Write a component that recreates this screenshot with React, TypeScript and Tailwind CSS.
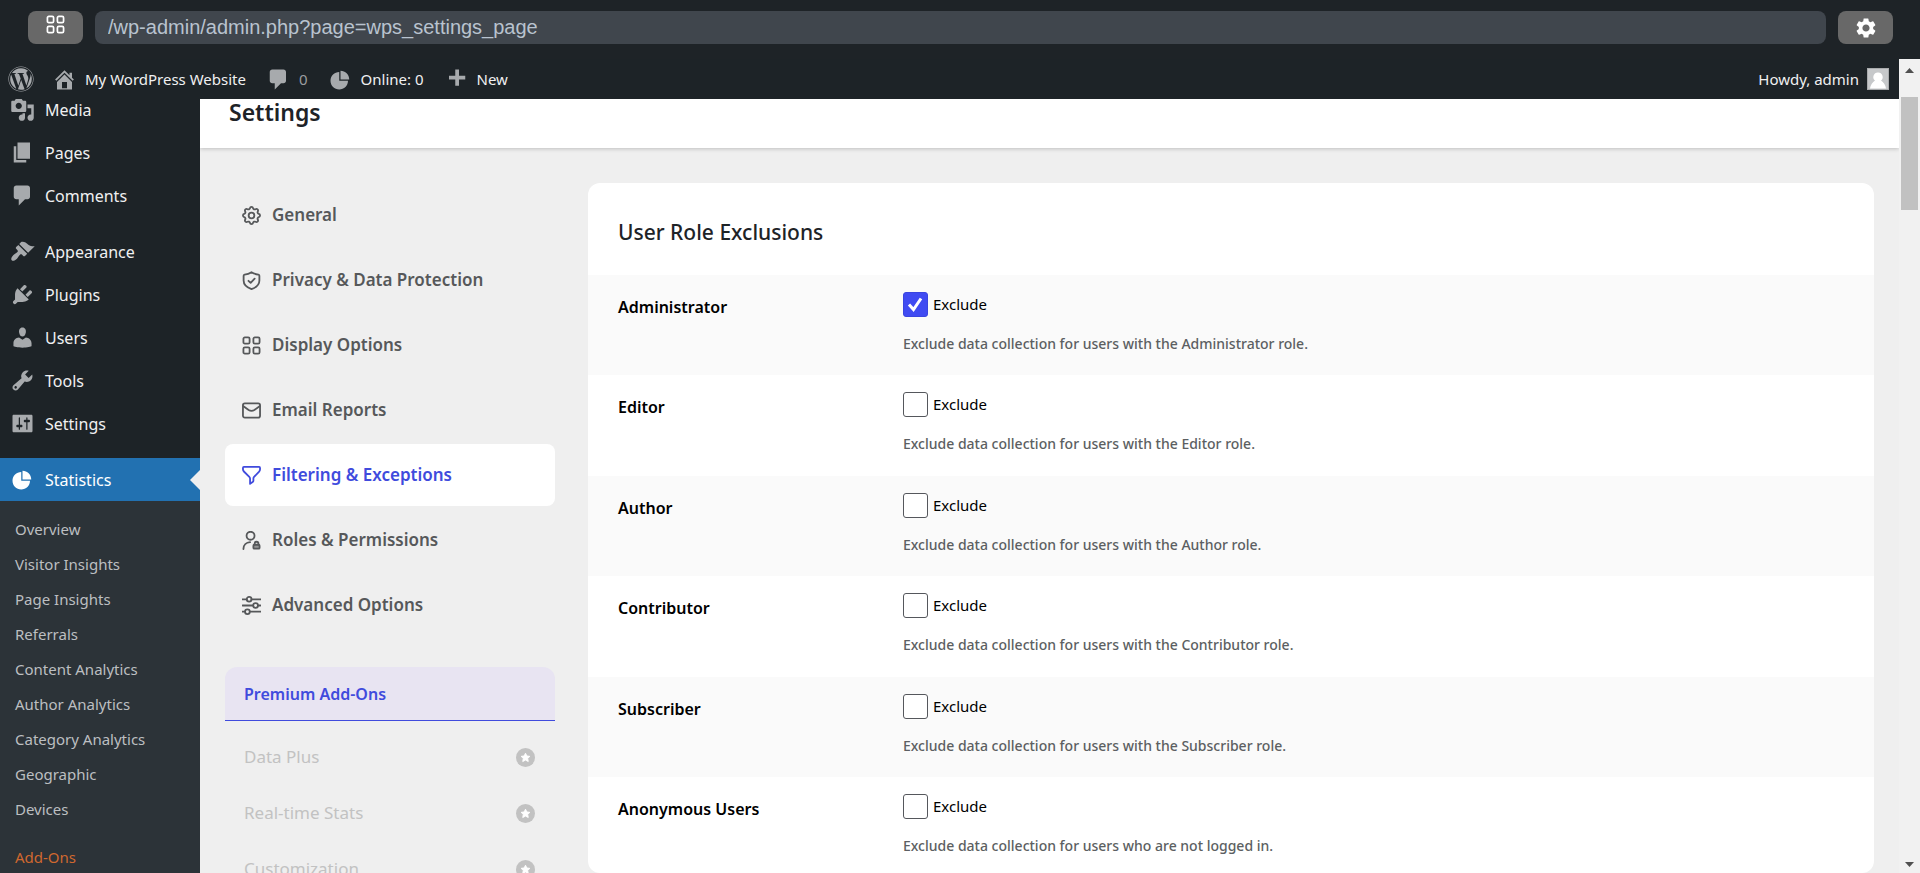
import type { ReactNode } from "react";
import { FaWordpress } from "react-icons/fa";
import { MdSettings } from "react-icons/md";

// 20x20 admin glyphs
const GLYPHS = {
  home: "M16 8.5l1.53 1.53-1.06 1.06L10 4.6l-6.47 6.49-1.06-1.06L10 2.5l4 4v-2h2v4zm-6-2.46l6 5.99V18H4v-5.97zM12 17v-5H8v5h4z",
  plus: "M17 7v3h-5v5H9v-5H4V7h5V2h3v5h5z",
  comments: "M5 2h9c1.1 0 2 .9 2 2v7c0 1.1-.9 2-2 2h-2l-5 5v-5H5c-1.1 0-2-.9-2-2V4c0-1.1.9-2 2-2z",
  pie: "M10 10V3c3.87 0 7 3.13 7 7h-7zM9 4v7h7c0 3.87-3.13 7-7 7s-7-3.13-7-7 3.13-7 7-7z",
  media:
    "M13 11V4c0-.55-.45-1-1-1h-1.67L9 1H5L3.67 3H2c-.55 0-1 .45-1 1v7c0 .55.45 1 1 1h10c.55 0 1-.45 1-1zM7 4.5c1.38 0 2.5 1.12 2.5 2.5S8.38 9.5 7 9.5 4.5 8.38 4.5 7 5.62 4.5 7 4.5zM14 6h5v10.5c0 1.38-1.12 2.5-2.5 2.5S14 17.88 14 16.5s1.12-2.5 2.5-2.5c.17 0 .34.02.5.05V9h-3V6zm-4 8.05V13h2v3.5c0 1.38-1.12 2.5-2.5 2.5S7 17.88 7 16.5 8.12 14 9.5 14c.17 0 .34.02.5.05z",
  pages: "M6 15V2h10v13H6zm-1 1h8v2H3V5h2v11z",
  appearance:
    "M14.48 11.06L7.41 3.99l1.5-1.5c.5-.56 2.3-.47 3.51.32 1.21.8 1.43 1.28 2.91 2.1 1.18.64 2.45 1.26 4.45.85zm-.71.71L6.7 4.7 4.93 6.47c-.39.39-.39 1.02 0 1.41l1.06 1.06c.39.39.39 1.03 0 1.42-.6.6-1.43 1.11-2.21 1.69-.35.26-.7.53-1.01.84C1.43 14.23.4 16.08 1.4 17.07c.99 1 2.84-.03 4.18-1.36.31-.31.58-.66.85-1.02.57-.78 1.08-1.61 1.69-2.21.39-.39 1.02-.39 1.41 0l1.06 1.06c.39.39 1.02.39 1.41 0z",
  plugins:
    "M13.11 4.36L9.87 7.6 8 5.73l3.24-3.24c.35-.34 1.05-.2 1.56.32.52.51.66 1.21.31 1.55zm-8 1.77l.91-1.12 9.01 9.01-1.19.84c-.71.71-2.63 1.16-3.82 1.16H6.14L4.9 17.26c-.59.59-1.54.59-2.12 0-.59-.58-.59-1.53 0-2.12l1.24-1.24v-3.88c0-1.13.4-3.19 1.09-3.89zm7.26 3.97l3.24-3.24c.34-.35 1.04-.21 1.55.31.52.51.66 1.21.31 1.55l-3.24 3.25z",
  users:
    "M10 9.25c-2.27 0-2.73-3.44-2.73-3.44C7 4.02 7.82 2 9.97 2c2.16 0 2.98 2.02 2.71 3.81 0 0-.41 3.44-2.68 3.44zm0 2.57L12.72 10c2.39 0 4.52 2.33 4.52 4.53v2.49s-3.65 1.13-7.24 1.13c-3.65 0-7.24-1.13-7.24-1.13v-2.49c0-2.25 1.94-4.48 4.47-4.48z",
  tools:
    "M16.68 9.77c-1.34 1.34-3.3 1.67-4.95.99l-5.41 6.52c-.99.99-2.59.99-3.58 0s-.99-2.59 0-3.57l6.52-5.42c-.68-1.65-.35-3.61.99-4.95 1.28-1.28 3.12-1.62 4.72-1.06l-2.89 2.89 2.82 2.82 2.86-2.87c.53 1.58.18 3.39-1.08 4.65zM3.81 16.21c.4.39 1.04.39 1.43 0 .4-.4.4-1.04 0-1.43-.39-.4-1.03-.4-1.43 0-.39.39-.39 1.03 0 1.43z",
  settings:
    "M18 16V4c0-.55-.45-1-1-1H3c-.55 0-1 .45-1 1v12c0 .55.45 1 1 1h14c.55 0 1-.45 1-1zM8 11h1c.55 0 1 .45 1 1s-.45 1-1 1H8v1.5c0 .28-.22.5-.5.5s-.5-.22-.5-.5V13H6c-.55 0-1-.45-1-1s.45-1 1-1h1V5.5c0-.28.22-.5.5-.5s.5.22.5.5V11zm5-2h-1c-.55 0-1-.45-1-1s.45-1 1-1h1V5.5c0-.28.22-.5.5-.5s.5.22.5.5V7h1c.55 0 1 .45 1 1s-.45 1-1 1h-1v5.5c0 .28-.22.5-.5.5s-.5-.22-.5-.5V9z",
};

type GlyphName = keyof typeof GLYPHS;

const MENU: { label: string; icon: GlyphName }[][] = [
  [
    { label: "Media", icon: "media" },
    { label: "Pages", icon: "pages" },
    { label: "Comments", icon: "comments" },
  ],
  [
    { label: "Appearance", icon: "appearance" },
    { label: "Plugins", icon: "plugins" },
    { label: "Users", icon: "users" },
    { label: "Tools", icon: "tools" },
    { label: "Settings", icon: "settings" },
  ],
];

const SUBMENU = [
  "Overview",
  "Visitor Insights",
  "Page Insights",
  "Referrals",
  "Content Analytics",
  "Author Analytics",
  "Category Analytics",
  "Geographic",
  "Devices",
];

const SquaresIcon = (
  <>
    <rect x="1.5" y="1.5" width="6.5" height="6.5" rx="1.5" />
    <rect x="12" y="1.5" width="6.5" height="6.5" rx="1.5" />
    <rect x="1.5" y="12" width="6.5" height="6.5" rx="1.5" />
    <rect x="12" y="12" width="6.5" height="6.5" rx="1.5" />
  </>
);

const TABS: { label: string; active?: boolean; icon: ReactNode }[] = [
  {
    label: "General",
    icon: (
      <g transform="translate(-2 -2)">
        <path d="M10.325 4.317c.426 -1.756 2.924 -1.756 3.35 0a1.724 1.724 0 0 0 2.573 1.066c1.543 -.94 3.31 .826 2.37 2.37a1.724 1.724 0 0 0 1.065 2.572c1.756 .426 1.756 2.924 0 3.35a1.724 1.724 0 0 0 -1.066 2.573c.94 1.543 -.826 3.31 -2.37 2.37a1.724 1.724 0 0 0 -2.572 1.065c-.426 1.756 -2.924 1.756 -3.35 0a1.724 1.724 0 0 0 -2.573 -1.066c-1.543 .94 -3.31 -.826 -2.37 -2.37a1.724 1.724 0 0 0 -1.065 -2.572c-1.756 -.426 -1.756 -2.924 0 -3.35a1.724 1.724 0 0 0 1.066 -2.573c-.94 -1.543 .826 -3.31 2.37 -2.37c1 .608 2.296 .07 2.572 -1.065z" />
        <circle cx="12" cy="12" r="3" />
      </g>
    ),
  },
  {
    label: "Privacy & Data Protection",
    icon: (
      <>
        <path d="M10 1.2c2.5 1.6 5 2.3 7.3 2.6.6.1 1 .6 1 1.2v5c0 4.3-3.3 7.3-8.3 9-5-1.7-8.3-4.7-8.3-9V5c0-.6.4-1.1 1-1.2C5 3.5 7.5 2.8 10 1.2z" />
        <path d="M6.8 10.3l2.3 2.2 4.2-4.4" />
      </>
    ),
  },
  { label: "Display Options", icon: SquaresIcon },
  {
    label: "Email Reports",
    icon: (
      <>
        <rect x="1" y="2.5" width="18" height="15" rx="2" />
        <path d="M1.5 5.5l5.5 4c2 1.3 4 1.3 6 0l5.5-4" />
      </>
    ),
  },
  {
    label: "Filtering & Exceptions",
    active: true,
    icon: (
      <path d="M2 1h16c.6 0 1 .4 1 1v1.5c0 1-.4 1.8-1 2.5l-5.3 5.5c-.5.5-.7 1-.7 1.7v2.3c0 .6-.3 1.1-.8 1.4L8.5 18.8v-5.3c0-.8-.3-1.5-.8-2L2 5.8c-.6-.6-1-1.4-1-2.3V2c0-.6.4-1 1-1z" />
    ),
  },
  {
    label: "Roles & Permissions",
    icon: (
      <>
        <circle cx="9" cy="5" r="4.2" />
        <path d="M1.5 19c0-4.3 3-7 7-7.2" />
        <rect x="12" y="14.5" width="6.5" height="4" rx="1" fill="currentColor" fillOpacity="0.6" />
        <path d="M13.3 14.3v-1a2 2 0 0 1 4 0v1" />
      </>
    ),
  },
  {
    label: "Advanced Options",
    icon: (
      <>
        <path d="M.5 3.5h4.5M10 3.5h9.5M.5 10h11M17 10h2.5M.5 16.5h2.5M8.5 16.5h11" />
        <circle cx="7.5" cy="3.5" r="2.5" />
        <circle cx="14.3" cy="10" r="2.5" />
        <circle cx="5.7" cy="16.5" r="2.5" />
      </>
    ),
  },
];

const ADDONS = ["Data Plus", "Real-time Stats", "Customization"];

const ROLES = [
  { name: "Administrator", who: "with the Administrator role", checked: true },
  { name: "Editor", who: "with the Editor role" },
  { name: "Author", who: "with the Author role" },
  { name: "Contributor", who: "with the Contributor role" },
  { name: "Subscriber", who: "with the Subscriber role" },
  { name: "Anonymous Users", who: "who are not logged in" },
];

function Glyph({ name, className }: { name: GlyphName; className: string }) {
  return (
    <svg viewBox="0 0 20 20" fill="currentColor" fillRule="evenodd" className={className}>
      <path d={GLYPHS[name]} />
    </svg>
  );
}

function BrowserBar() {
  return (
    <div className="flex h-[59px] shrink-0 items-start gap-3 bg-[#1e2327] pt-[11px] pr-[27px] pl-7">
      <button aria-label="Apps" className="flex h-[33px] w-[55px] items-center justify-center rounded-lg bg-[#686868] pb-1.5 text-white">
        <svg viewBox="0 0 20 20" fill="none" stroke="currentColor" strokeWidth="1.8" className="size-[19px]">
          {SquaresIcon}
        </svg>
      </button>
      <input
        aria-label="Address"
        defaultValue="/wp-admin/admin.php?page=wps_settings_page"
        className="h-[33px] min-w-0 flex-1 rounded-lg bg-[#40464d] px-[13px] font-['Liberation_Sans',sans-serif] text-[20px] text-[#b9c3cf] outline-none"
      />
      <button aria-label="Settings" className="flex h-[33px] w-[55px] items-center justify-center rounded-lg bg-[#686868] text-white">
        <MdSettings className="size-6" />
      </button>
    </div>
  );
}

function AdminBar() {
  return (
    <header className="flex h-10 shrink-0 items-center bg-[#1d2327] pr-[10px] pl-2 text-[15px] text-[#f0f0f1]">
      <a href="#" aria-label="WordPress" className="text-[#a7aaad]">
        <FaWordpress className="size-[26px]" />
      </a>
      <a href="#" className="ml-[18px] flex items-center gap-2">
        <Glyph name="home" className="size-[25px] text-[#a7aaad]" />
        My WordPress Website
      </a>
      <a href="#" className="ml-5 flex items-center gap-2 text-[#9a9da0]">
        <Glyph name="comments" className="size-[25px] text-[#a7aaad]" />
        0
      </a>
      <a href="#" className="ml-5 flex items-center gap-2">
        <Glyph name="pie" className="size-[25px] text-[#a7aaad]" />
        Online: 0
      </a>
      <a href="#" className="ml-5 flex items-center gap-2">
        <Glyph name="plus" className="size-[25px] text-[#a7aaad]" />
        New
      </a>
      <a href="#" className="ml-auto flex items-center gap-2">
        Howdy, admin
        <svg viewBox="0 0 22 22" className="size-[22px]">
          <rect width="22" height="22" fill="#a9abad" />
          <rect x="1" y="1" width="20" height="20" fill="#c6c8ca" />
          <path d="M11 4.5a4.5 4.5 0 0 1 3 8c2.5 1.5 4.5 4.5 5 8H3c.5-3.5 2.5-6.500 5-8a4.5 4.5 0 0 1 3-8z" fill="#fff" />
        </svg>
      </a>
    </header>
  );
}

function Sidebar() {
  return (
    <nav aria-label="Main menu" className="w-[200px] shrink-0 overflow-hidden bg-[#1d2327] text-[16px] text-[#f0f0f1]">
      {/* list is scrolled slightly under the admin bar */}
      <div className="-mt-[11px]">
        {MENU.map((group, i) => (
          <ul key={i} className="mb-[13px]">
            {group.map(({ label, icon }) => (
              <li key={label}>
                <a href="#" className="flex h-[43px] items-center gap-[10px] pl-[10px]">
                  <Glyph name={icon} className="size-[25px] text-[#a7aaad]" />
                  {label}
                </a>
              </li>
            ))}
          </ul>
        ))}
        <a href="#" className="relative flex h-[43px] items-center gap-[10px] bg-[#2271b1] pl-[10px] text-white">
          <Glyph name="pie" className="size-[25px]" />
          Statistics
          <span className="absolute top-1/2 right-0 -translate-y-1/2 border-y-10 border-r-10 border-y-transparent border-r-[#efefef]" />
        </a>
        <ul className="bg-[#2c3338] pt-[11px] pb-10 text-[15px] text-[#bcbfc1]">
          {SUBMENU.map((label) => (
            <li key={label}>
              <a href="#" className="flex h-[35px] items-center pl-[15px]">{label}</a>
            </li>
          ))}
          <li className="mt-[13px]">
            <a href="#" className="flex h-[35px] items-center pl-[15px] text-[#d0682f]">Add-Ons</a>
          </li>
        </ul>
      </div>
    </nav>
  );
}

function SettingsNav() {
  return (
    <nav aria-label="Settings sections" className="w-[330px] shrink-0 pt-px">
      <ul className="flex flex-col gap-[3px] text-[17px] font-semibold text-[#56585a]">
        {TABS.map(({ label, icon, active }) => (
          <li key={label}>
            <a
              href="#"
              className={`flex h-[62px] items-center gap-[11px] rounded-lg pl-[17px] ${active ? "bg-white text-[#404bdd]" : ""}`}
            >
              <svg
                viewBox="0 0 20 20"
                fill="none"
                stroke="currentColor"
                strokeWidth="1.9"
                strokeLinecap="round"
                strokeLinejoin="round"
                className="size-[19px]"
              >
                {icon}
              </svg>
              {label}
            </a>
          </li>
        ))}
      </ul>
      <h3 className="mt-[31px] flex h-[54px] items-center rounded-t-xl border-b border-[#404bdd] bg-[#e8e4f2] pl-[19px] text-[16px] font-semibold text-[#404bdd]">
        Premium Add-Ons
      </h3>
      <ul className="pt-2 text-[17px] text-[#c2c2c2]">
        {ADDONS.map((label) => (
          <li key={label}>
            <a href="#" className="flex h-14 items-center justify-between pr-5 pl-[19px]">
              {label}
              <svg viewBox="0 0 20 20" className="size-[19px]">
                <circle cx="10" cy="10" r="10" fill="#c2c2c2" />
                <path
                  d="M10 5.5l1.4 2.9 3.2.4-2.3 2.2.6 3.2-2.9-1.5-2.9 1.5.6-3.2-2.3-2.2 3.2-.4z"
                  fill="#fff"
                  stroke="#fff"
                  strokeLinejoin="round"
                />
              </svg>
            </a>
          </li>
        ))}
      </ul>
    </nav>
  );
}

function RoleExclusions() {
  return (
    <section className="min-w-0 flex-1 overflow-hidden rounded-xl bg-white">
      <h2 className="flex h-[92px] items-center px-[30px] pt-2 text-[21px] font-medium text-[#1e2327]">User Role Exclusions</h2>
      <ul>
        {ROLES.map(({ name, who, checked }, i) => (
          <li key={name} className="flex px-[30px] pt-[17px] pb-5 last:pb-[15px] odd:bg-[#fafafa] odd:pb-[19px]">
            <h4 className="w-[285px] shrink-0 pt-[3px] text-[16px] leading-6 font-semibold text-black">{name}</h4>
            <div>
              <label className="flex h-[25px] items-center gap-[5px] text-[15px] text-black">
                <span className="relative">
                  <input
                    type="checkbox"
                    defaultChecked={checked}
                    aria-describedby={`role-${i}`}
                    className="peer block size-[25px] appearance-none rounded-[3px] border border-[#55575c] bg-white checked:border-[#3a45e0] checked:bg-[#404bf2]"
                  />
                  <svg viewBox="0 0 25 25" className="pointer-events-none absolute inset-0 hidden size-[25px] peer-checked:block">
                    <path d="M6 12.5l4.500 5 7.500-11" fill="none" stroke="#fff" strokeWidth="3" />
                  </svg>
                </span>
                Exclude
              </label>
              <p id={`role-${i}`} className="mt-[15px] text-[14px] leading-6 font-medium text-[#5c5f62]">
                Exclude data collection for users {who}.
              </p>
            </div>
          </li>
        ))}
      </ul>
    </section>
  );
}

function Scrollbar() {
  return (
    <div className="flex w-[21px] shrink-0 flex-col items-center bg-[#f1f1f1] pt-[9px] pb-[6px]">
      <svg viewBox="0 0 9 5" className="h-[5px] w-[9px] fill-[#505050]">
        <path d="M0 5L4.5 0 9 5z" />
      </svg>
      <div className="mt-6 h-[113px] w-[17px] bg-[#c1c1c1]" />
      <svg viewBox="0 0 9 5" className="mt-auto h-[5px] w-[9px] fill-[#505050]">
        <path d="M0 0L4.5 5 9 0z" />
      </svg>
    </div>
  );
}

export default function App() {
  return (
    <div className="flex h-screen flex-col overflow-hidden bg-[#efefef] font-['Noto_Sans','Open_Sans',sans-serif]">
      <BrowserBar />
      <div className="flex min-h-0 flex-1">
        <div className="flex min-w-0 flex-1 flex-col">
          <AdminBar />
          <div className="flex min-h-0 flex-1">
            <Sidebar />
            <main className="min-w-0 flex-1 overflow-hidden">
              <div className="h-[49px] bg-white pl-[29px] shadow-[0_1px_4px_rgba(0,0,0,0.2)]">
                <h1 className="text-[23px] leading-[26px] font-semibold text-[#1e2327]">Settings</h1>
              </div>
              <div className="flex items-start gap-[33px] pt-[35px] pr-[25px] pl-[25px]">
                <SettingsNav />
                <RoleExclusions />
              </div>
            </main>
          </div>
        </div>
        <Scrollbar />
      </div>
    </div>
  );
}
